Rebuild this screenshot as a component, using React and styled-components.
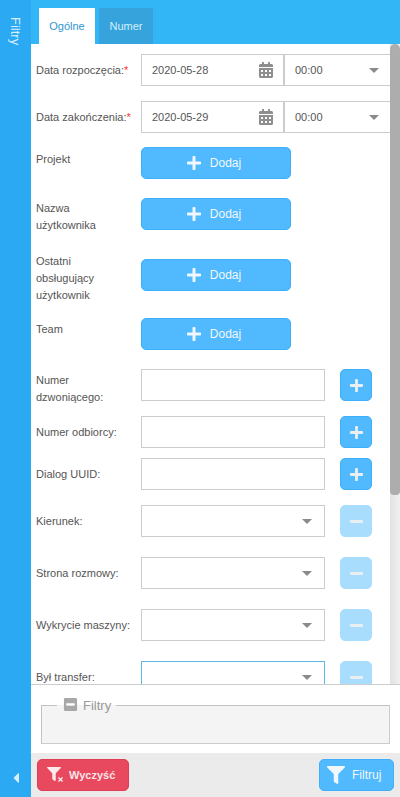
import React from 'react';
import styled, { createGlobalStyle } from 'styled-components';
import { FaCalendarAlt, FaCaretLeft, FaFilter, FaMinus, FaMinusSquare, FaPlus, FaTimes } from 'react-icons/fa';

const GlobalStyle = createGlobalStyle`
  html, body {
    margin: 0;
    padding: 0;
    height: 100%;
    overflow: hidden;
    font-family: "Liberation Sans", Arial, sans-serif;
  }
  * { box-sizing: border-box; }
`;

const Caret = () => (
  <CaretIcon viewBox="0 0 10 5">
    <path d="M0 0h10L5 5z" fill="currentColor" />
  </CaretIcon>
);

const AddButton = () => (
  <WideButton type="button">
    <FaPlus size={16} />
    <span>Dodaj</span>
  </WideButton>
);

const App = () => {
  return (
    <Page>
      <GlobalStyle />
      <SideBar>
        <SideTitle>Filtry</SideTitle>
        <FaCaretLeft size={16} />
      </SideBar>
      <Main>
        <TabBar>
          <Tab $active>Ogólne</Tab>
          <Tab>Numer</Tab>
        </TabBar>
        <ScrollArea>
          <Form>
            <DateRow $gap={15}>
              <Label>Data rozpoczęcia:<Req>*</Req></Label>
              <DateBox>
                <span>2020-05-28</span>
                <FaCalendarAlt size={16} />
              </DateBox>
              <TimeBox>
                <span>00:00</span>
                <Caret />
              </TimeBox>
            </DateRow>
            <DateRow $gap={14}>
              <Label>Data zakończenia:<Req>*</Req></Label>
              <DateBox>
                <span>2020-05-29</span>
                <FaCalendarAlt size={16} />
              </DateBox>
              <TimeBox>
                <span>00:00</span>
                <Caret />
              </TimeBox>
            </DateRow>
            <ButtonRow $gap={19}>
              <Label $shift={4}>Projekt</Label>
              <AddButton />
            </ButtonRow>
            <ButtonRow $gap={29}>
              <Label $shift={2}>Nazwa<br />użytkownika</Label>
              <AddButton />
            </ButtonRow>
            <ButtonRow $gap={27}>
              <Label $shift={-6}>Ostatni<br />obsługujący<br />użytkownik</Label>
              <AddButton />
            </ButtonRow>
            <ButtonRow $gap={19}>
              <Label $shift={3}>Team</Label>
              <AddButton />
            </ButtonRow>
            <FieldRow $gap={15}>
              <Label $shift={3}>Numer<br />dzwoniącego:</Label>
              <TextBox />
              <SquareButton type="button"><FaPlus size={15} /></SquareButton>
            </FieldRow>
            <FieldRow $gap={10}>
              <Label>Numer odbiorcy:</Label>
              <TextBox />
              <SquareButton type="button"><FaPlus size={15} /></SquareButton>
            </FieldRow>
            <FieldRow $gap={15}>
              <Label>Dialog UUID:</Label>
              <TextBox />
              <SquareButton type="button"><FaPlus size={15} /></SquareButton>
            </FieldRow>
            <FieldRow $gap={20}>
              <Label>Kierunek:</Label>
              <TextBox><Caret /></TextBox>
              <SquareButton type="button" $off><FaMinus size={15} /></SquareButton>
            </FieldRow>
            <FieldRow $gap={20}>
              <Label>Strona rozmowy:</Label>
              <TextBox><Caret /></TextBox>
              <SquareButton type="button" $off><FaMinus size={15} /></SquareButton>
            </FieldRow>
            <FieldRow $gap={20}>
              <Label>Wykrycie maszyny:</Label>
              <TextBox><Caret /></TextBox>
              <SquareButton type="button" $off><FaMinus size={15} /></SquareButton>
            </FieldRow>
            <FieldRow $gap={0}>
              <Label>Był transfer:</Label>
              <TextBox $focus><Caret /></TextBox>
              <SquareButton type="button" $off><FaMinus size={15} /></SquareButton>
            </FieldRow>
          </Form>
          <ScrollTrack>
            <ScrollThumb />
          </ScrollTrack>
        </ScrollArea>
        <FilterPanel>
          <FilterSet>
            <FilterLegend>
              <FaMinusSquare size={15} />
              <span>Filtry</span>
            </FilterLegend>
          </FilterSet>
        </FilterPanel>
        <Footer>
          <ClearButton type="button">
            <ClearIcon>
              <FaFilter size={14} />
              <FaTimes size={7} />
            </ClearIcon>
            <span>Wyczyść</span>
          </ClearButton>
          <ApplyButton type="button">
            <FaFilter size={18} />
            <span>Filtruj</span>
          </ApplyButton>
        </Footer>
      </Main>
    </Page>
  );
};

const Page = styled.div`
  display: flex;
  width: 400px;
  height: 797px;
  overflow: hidden;
  background: #fff;
  font-size: 11px;
  color: #555;
`;

const SideBar = styled.aside`
  flex: 0 0 31px;
  display: flex;
  flex-direction: column;
  align-items: center;
  justify-content: space-between;
  padding: 17px 0 11px;
  background: #2ba9f3;
  color: #d5eefd;
`;

const SideTitle = styled.div`
  writing-mode: vertical-rl;
  font-size: 13px;
  color: #d9f0fe;
`;

const Main = styled.div`
  flex: 1;
  min-width: 0;
  display: flex;
  flex-direction: column;
`;

const TabBar = styled.div`
  flex: 0 0 44px;
  display: flex;
  align-items: flex-end;
  gap: 4px;
  padding-left: 8px;
  background: #33b6f6;
`;

const Tab = styled.div`
  height: 36px;
  width: ${p => (p.$active ? '56px' : '54px')};
  display: flex;
  align-items: center;
  justify-content: center;
  font-size: 11px;
  background: ${p => (p.$active ? '#fff' : '#36a3dc')};
  color: ${p => (p.$active ? '#2f97cf' : '#d5eefa')};
`;

const ScrollArea = styled.div`
  position: relative;
  flex: 1;
  min-height: 0;
  overflow: hidden;
  border-bottom: 1px solid #ccc;
`;

const ScrollTrack = styled.div`
  position: absolute;
  top: 0;
  right: 0;
  bottom: 0;
  width: 10px;
  background: linear-gradient(to right, #e2e2e2, #f0f0f0);
`;

const ScrollThumb = styled.div`
  height: 451px;
  background: #adadad;
  border-radius: 5px 5px 4px 4px;
`;

const Form = styled.div`
  display: flex;
  flex-direction: column;
  padding: 10px 0 0 5px;
`;

const Row = styled.div`
  display: grid;
  grid-template-rows: 32px;
  height: 32px;
  flex-shrink: 0;
  margin-bottom: ${p => p.$gap}px;
`;

const DateRow = styled(Row)`
  grid-template-columns: 105px 143px 106px;
`;

const ButtonRow = styled(Row)`
  grid-template-columns: 105px 150px;
`;

const FieldRow = styled(Row)`
  grid-template-columns: 105px 184px 47px;

  & > button {
    margin-left: 15px;
  }
`;

const Label = styled.label`
  display: block;
  align-self: start;
  margin-top: ${p => p.$shift ?? 8}px;
  line-height: 17px;
  color: #555;
`;

const Req = styled.span`
  color: #f33;
`;

const BoxBase = styled.div`
  height: 32px;
  display: flex;
  align-items: center;
  justify-content: space-between;
  background: #fff;
  border: 1px solid #ccc;
  color: #555;
`;

const DateBox = styled(BoxBase)`
  padding: 0 9px 0 10px;

  svg {
    color: #8e8e8e;
  }
`;

const TimeBox = styled(BoxBase)`
  padding: 0 11px 0 10px;
  border-right: none;
`;

const TextBox = styled(BoxBase)`
  justify-content: flex-end;
  padding-right: 12px;
  border-color: ${p => (p.$focus ? '#5cb8e6' : '#ccc')};
`;

const CaretIcon = styled.svg`
  width: 10px;
  height: 5px;
  color: #8a8a8a;
`;

const WideButton = styled.button`
  height: 32px;
  display: flex;
  align-items: center;
  justify-content: center;
  gap: 8px;
  padding: 0 5px 0 0;
  background: #51b9fd;
  border: 1px solid #3eb0fb;
  border-radius: 5px;
  font: 12px "Liberation Sans", Arial, sans-serif;
  color: #f0f8fd;
`;

const SquareButton = styled.button`
  width: 32px;
  height: 32px;
  display: flex;
  align-items: center;
  justify-content: center;
  padding: 0;
  background: ${p => (p.$off ? '#a9ddfe' : '#51b9fd')};
  border: 1px solid ${p => (p.$off ? '#a9ddfe' : '#3eb0fb')};
  border-radius: 5px;
  color: #e8eef2;
`;

const FilterPanel = styled.div`
  flex: 0 0 68px;
  padding: 13px 10px 0;
  background: #fff;
`;

const FilterSet = styled.fieldset`
  height: 46px;
  margin: 0;
  padding: 0 15px;
  background: #f4f4f4;
  border: 1px solid #c2c2c2;
  border-bottom-color: #ccc;
  border-right-color: #ccc;
`;

const FilterLegend = styled.legend`
  display: flex;
  align-items: center;
  gap: 5px;
  padding: 0 5px 0 6px;
  font-size: 13px;
  line-height: 15px;
  color: #999;

  svg {
    margin-top: -3px;
    color: #a8a8a8;
  }
`;

const Footer = styled.div`
  flex: 0 0 44px;
  display: flex;
  align-items: flex-start;
  justify-content: space-between;
  padding: 6px 6px 0;
  background: #ebebeb;
`;

const FooterButton = styled.button`
  height: 32px;
  display: flex;
  align-items: center;
  padding: 0;
  border-radius: 5px;
  font: 12px "Liberation Sans", Arial, sans-serif;
`;

const ClearButton = styled(FooterButton)`
  width: 92px;
  gap: 7px;
  padding-left: 9px;
  background: #e8495f;
  border: 1px solid #df3e55;
  color: #fbe3e6;
  font-weight: bold;
  font-size: 11px;
`;

const ClearIcon = styled.span`
  position: relative;
  width: 15px;
  height: 16px;
  display: flex;
  color: #fbe9eb;

  svg:last-child {
    position: absolute;
    right: -2px;
    bottom: 0;
  }
`;

const ApplyButton = styled(FooterButton)`
  width: 75px;
  gap: 7px;
  padding-left: 7px;
  background: #51b9fd;
  border: 1px solid #3eb0fb;
  color: #f0f8fd;
`;

export default App;
